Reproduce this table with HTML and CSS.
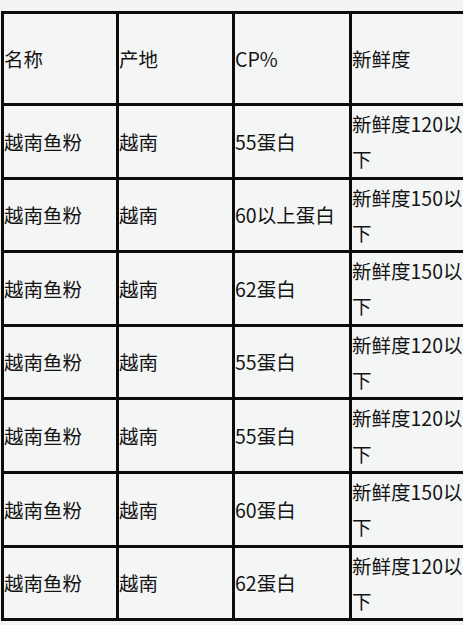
FILE: index.html
```html
<!DOCTYPE html>
<html lang="zh">
<head>
<meta charset="utf-8">
<title>越南鱼粉</title>
<link rel="stylesheet" href="styles.css">
</head>
<body>
<div class="page">
<table class="grid">
  <colgroup><col class="c1"><col class="c2"><col class="c3"><col class="c4"></colgroup>
  <tr class="head"><td>名称</td><td>产地</td><td>CP%</td><td>新鲜度</td></tr>
  <tr><td>越南鱼粉</td><td>越南</td><td>55蛋白</td><td>新鲜度120以下</td></tr>
  <tr><td>越南鱼粉</td><td>越南</td><td>60以上蛋白</td><td>新鲜度150以下</td></tr>
  <tr><td>越南鱼粉</td><td>越南</td><td>62蛋白</td><td>新鲜度150以下</td></tr>
  <tr><td>越南鱼粉</td><td>越南</td><td>55蛋白</td><td>新鲜度120以下</td></tr>
  <tr><td>越南鱼粉</td><td>越南</td><td>55蛋白</td><td>新鲜度120以下</td></tr>
  <tr><td>越南鱼粉</td><td>越南</td><td>60蛋白</td><td>新鲜度150以下</td></tr>
  <tr><td>越南鱼粉</td><td>越南</td><td>62蛋白</td><td>新鲜度120以下</td></tr>
</table>
</div>
</body>
</html>
```
FILE: styles.css
```css
html, body {
  margin: 0;
  padding: 0;
  background: #f2f4f4;
}
.page {
  width: 463px;
  height: 625px;
  overflow: hidden;
  padding-top: 11px;
  padding-left: 1px;
  box-sizing: border-box;
}
.grid {
  border-collapse: collapse;
  table-layout: fixed;
  width: 478px;
  font-family: "Noto Sans CJK SC", "Microsoft YaHei", sans-serif;
  font-size: 19.5px;
  line-height: 35.3px;
  color: #141414;
  background: #f4f6f6;
}
.c1 { width: 115px; }
.c2 { width: 116px; }
.c3 { width: 117px; }
.c4 { width: 130px; }
.grid td {
  border: 3px solid #0c0c0c;
  padding: 0;
  vertical-align: middle;
  height: 67px;
  word-break: break-all;
}
.grid tr.head td {
  height: 89px;
}
```
